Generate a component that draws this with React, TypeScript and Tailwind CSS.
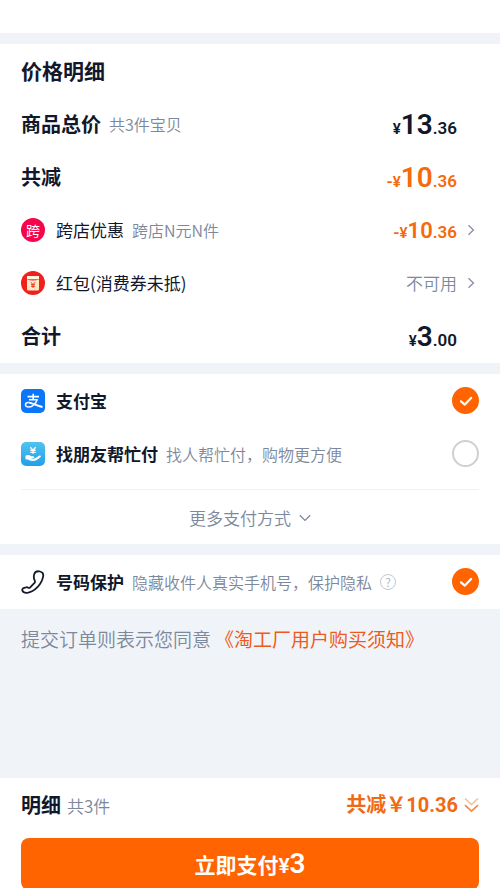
import { useState } from "react";
import type { ReactNode } from "react";

function Price({ whole, cents, minus, size = "lg" }: { whole: string; cents: string; minus?: boolean; size?: "lg" | "md" }) {
  return (
    <span className="flex items-baseline pt-0.5 font-['Roboto',sans-serif] font-semibold text-[17px] leading-none">
      {minus && <span>-</span>}
      <span className="text-[15px]">¥</span>
      <span className={size === "lg" ? "text-[28px]" : "text-[22px]"}>{whole}</span>
      <span>.{cents}</span>
    </span>
  );
}

function Chevron() {
  return (
    <svg className="w-2 h-3" viewBox="0 0 8 12" fill="none" stroke="#8a93a3" strokeWidth="1.4" aria-hidden="true">
      <path d="M1.5 1.2 6.4 6 1.5 10.8" />
    </svg>
  );
}

function AlipayIcon() {
  return (
    <svg className="size-6 mr-[11px]" viewBox="0 0 24 24" aria-hidden="true">
      <rect width="24" height="24" rx="5" fill="#0b76fa" />
      <g fill="none" stroke="#fff">
        <path d="M6.500 7.600h11.500M12.200 4.800v5.400" strokeWidth="1.6" />
        <path d="M8 10.800h8.200c-1.300 3.600-4.600 7.300-8.300 7.300-2.200 0-3.500-1-3.400-2.400.1-1.400 1.500-2.200 3.300-2.100" strokeWidth="1.5" strokeLinejoin="round" />
        <path d="M7.800 13.600c3.600.2 7.200 2.900 13.700 4.400" strokeWidth="1.900" />
      </g>
    </svg>
  );
}

function PhoneIcon() {
  return (
    <svg className="w-6 h-6" viewBox="0 0 24 24" fill="none" stroke="#151b2b" strokeWidth="1.8" strokeLinejoin="round" aria-hidden="true">
      <path d="M13.300 4C14.200 1.800 16.600.9 19 1.500c2.500.6 3.600 2.300 3.200 4.700-.6 3.700-2.600 7.700-5.500 10.700-3.100 3.200-6.900 5.500-10.400 5.900-2.400.2-4.300-.6-4.900-2.100-.5-1.400.3-2.500 1.800-2.900l1.900-.5c.9-.3 1.500 0 2.200.4.700.4 1.300.2 1.900-.4l4.300-4.500c.7-.8.7-1.500.2-2.400-.9-1.900-1.200-4.300-.4-6.400Z" />
    </svg>
  );
}

function Toggle({ type, name, label, checked, onChange }: { type: "radio" | "checkbox"; name: string; label: string; checked: boolean; onChange: () => void }) {
  return (
    <span className="grid place-items-center shrink-0">
      <input
        type={type}
        name={name}
        id={label}
        checked={checked}
        onChange={onChange}
        className="col-start-1 row-start-1 appearance-none size-[27px] rounded-full border-2 border-[#cdcfd3] bg-white checked:border-[#ff6400] checked:bg-[#ff6400]"
      />
      {checked && (
        <svg className="col-start-1 row-start-1 size-4 pointer-events-none" viewBox="0 0 16 16" fill="none" stroke="#fff" strokeWidth="2.2" strokeLinecap="round" strokeLinejoin="round" aria-hidden="true">
          <path d="M3 8.300 6.900 11.600 13.100 5" />
        </svg>
      )}
    </span>
  );
}

function Row({ children }: { children: ReactNode }) {
  return <div className="flex items-center h-[53px] px-[21px]">{children}</div>;
}

export default function App() {
  const [payment, setPayment] = useState("alipay");
  const [protect, setProtect] = useState(true);

  return (
    <div className="flex flex-col h-screen overflow-hidden bg-[#f0f4f8] text-[#11182b] font-['Noto_Sans_CJK_SC',sans-serif] leading-none">
      <main className="flex flex-col grow min-h-0 gap-[11px]">
        <div className="h-[33px] shrink-0 bg-white" />

        <section className="bg-white pb-px">
          <Row>
            <h1 className="text-[21px] font-bold">价格明细</h1>
          </Row>
          <Row>
            <h2 className="text-[20px] font-bold">商品总价</h2>
            <span className="ml-2 text-base font-[350] text-[#7c889c]">共3件宝贝</span>
            <span className="ml-auto mr-[22px]"><Price whole="13" cents="36" /></span>
          </Row>
          <Row>
            <h2 className="text-[20px] font-bold">共减</h2>
            <span className="ml-auto mr-[22px] text-[#f56a0c]"><Price whole="10" cents="36" minus /></span>
          </Row>
          <Row>
            <span className="grid place-items-center size-6 mr-[11px] rounded-full bg-[#f5054a] text-[14px] text-white">跨</span>
            <span className="text-[17px]">跨店优惠</span>
            <span className="ml-2 text-base font-[350] text-[#7c889c]">跨店N元N件</span>
            <button className="ml-auto flex items-center gap-2.5 mr-1 text-[#f56a0c]">
              <Price whole="10" cents="36" minus size="md" />
              <Chevron />
            </button>
          </Row>
          <Row>
            <svg className="size-6 mr-[11px]" viewBox="0 0 24 24" aria-hidden="true">
              <circle cx="12" cy="12" r="12" fill="#ee211c" />
              <path d="M6 5h12v3.300H6z" fill="#fff5e6" />
              <path d="M6 8.600q6 2 12 0V18q0 1.500-1.500 1.500h-9Q6 19.500 6 18z" fill="#fde6c3" />
              <path d="M10 11.300l2 2.400 2-2.400M10 13.700h4M10 15.400h4M12 13.700v3.300" fill="none" stroke="#e33b22" strokeWidth="1" />
            </svg>
            <span className="text-[17px]">红包(消费券未抵)</span>
            <button className="ml-auto flex items-center gap-2.5 mr-1 text-[17px] font-[350] text-[#7c889c]">
              不可用
              <Chevron />
            </button>
          </Row>
          <Row>
            <h2 className="text-[20px] font-bold">合计</h2>
            <span className="ml-auto mr-[22px]"><Price whole="3" cents="00" /></span>
          </Row>
        </section>

        <section className="bg-white">
          <Row>
            <AlipayIcon />
            <label htmlFor="支付宝" className="grow text-[17px] font-bold">支付宝</label>
            <Toggle type="radio" name="payment" label="支付宝" checked={payment === "alipay"} onChange={() => setPayment("alipay")} />
          </Row>
          <Row>
            <svg className="size-6 mr-[11px]" viewBox="0 0 24 24" aria-hidden="true">
              <defs>
                <linearGradient id="friend" x1="0" y1="0" x2="0" y2="1">
                  <stop offset="0" stopColor="#50c3ef" />
                  <stop offset="1" stopColor="#219fe9" />
                </linearGradient>
              </defs>
              <rect width="24" height="24" rx="5" fill="url(#friend)" />
              <path d="M9.300 5.200 12 8.300l2.700-3.100M9.300 8.400h5.400M9.300 10.300h5.400M12 8.300v3.500" fill="none" stroke="#fff" strokeWidth="1.300" />
              <path d="M4.500 13.800c1.800-1.200 3.500-1 5 0 .7.500 1.500.6 2.600.5 1.300 0 1.700 1.300.6 1.700l-2.700.5c1.800.5 3.400.3 5-.7l3.400-2.200c1.200-.6 2 .5 1.100 1.400-2.100 2.300-4.500 4-7.700 4-2.800 0-4-1.700-7.300-1.800z" fill="#fff" />
            </svg>
            <label htmlFor="找朋友帮忙付" className="grow flex items-center">
              <span className="text-[17px] font-bold">找朋友帮忙付</span>
              <span className="ml-2 text-base font-[350] text-[#7c889c]">找人帮忙付，购物更方便</span>
            </label>
            <Toggle type="radio" name="payment" label="找朋友帮忙付" checked={payment === "friend"} onChange={() => setPayment("friend")} />
          </Row>
          <div className="mx-[21px] mt-[9px] border-t border-[#f1f2f4]">
            <button className="flex items-center justify-center gap-2 w-full h-[54px] pt-px text-[17px] font-[350] text-[#7c889c]">
              更多支付方式
              <svg className="w-3 h-2" viewBox="0 0 12 8" fill="none" stroke="#7c889c" strokeWidth="1.300" aria-hidden="true">
                <path d="M.8 1.200 6 6.400l5.200-5.200" />
              </svg>
            </button>
          </div>
        </section>

        <section className="bg-white pb-px">
          <Row>
            <span className="mr-[11px]"><PhoneIcon /></span>
            <label htmlFor="号码保护" className="flex items-center">
              <span className="text-[17px] font-bold">号码保护</span>
              <span className="ml-2 text-base font-[350] text-[#7c889c]">隐藏收件人真实手机号，保护隐私</span>
            </label>
            <button aria-label="说明" className="grid place-items-center size-4 ml-2 mr-auto rounded-full border border-[#c3c7cd] text-[12px] font-[350] text-[#a9afb8]">?</button>
            <Toggle type="checkbox" name="protect" label="号码保护" checked={protect} onChange={() => setProtect(!protect)} />
          </Row>
        </section>

        <p className="flex gap-1 pl-[21px] pt-[9px] text-[19px] font-[350] text-[#7c889c]">
          提交订单则表示您同意
          <a href="#terms" className="font-normal text-[#ee5a1c]">《淘工厂用户购买须知》</a>
        </p>
      </main>

      <footer className="shrink-0 bg-white px-[21px]">
        <div className="flex items-center h-[54px] mb-1.5">
          <h2 className="text-[20px] font-bold">明细</h2>
          <span className="ml-1.5 text-[17px] font-[350] text-[#7c889c]">共3件</span>
          <button className="ml-auto flex items-center gap-1.5 text-[20px] font-bold text-[#f06a14]">
            <span className="font-['Roboto','Noto_Sans_CJK_SC',sans-serif]">共减￥10.36</span>
            <svg className="w-[15px] h-4" viewBox="0 0 15 16" fill="none" stroke="#f06a14" strokeWidth="1.600" aria-hidden="true">
              <path d="M1 1.500 7.500 7.500 14 1.500" opacity=".45" />
              <path d="M1 8.200 7.500 14.200 14 8.200" opacity=".8" />
            </svg>
          </button>
        </div>
        <button className="flex items-center justify-center w-full h-[52px] -mb-0.5 rounded-lg bg-[#ff6400] text-[21px] font-bold text-white">
          立即支付
          <span className="flex items-baseline font-['Roboto',sans-serif] font-semibold">
            ¥<span className="text-[28px]">3</span>
          </span>
        </button>
      </footer>
    </div>
  );
}
